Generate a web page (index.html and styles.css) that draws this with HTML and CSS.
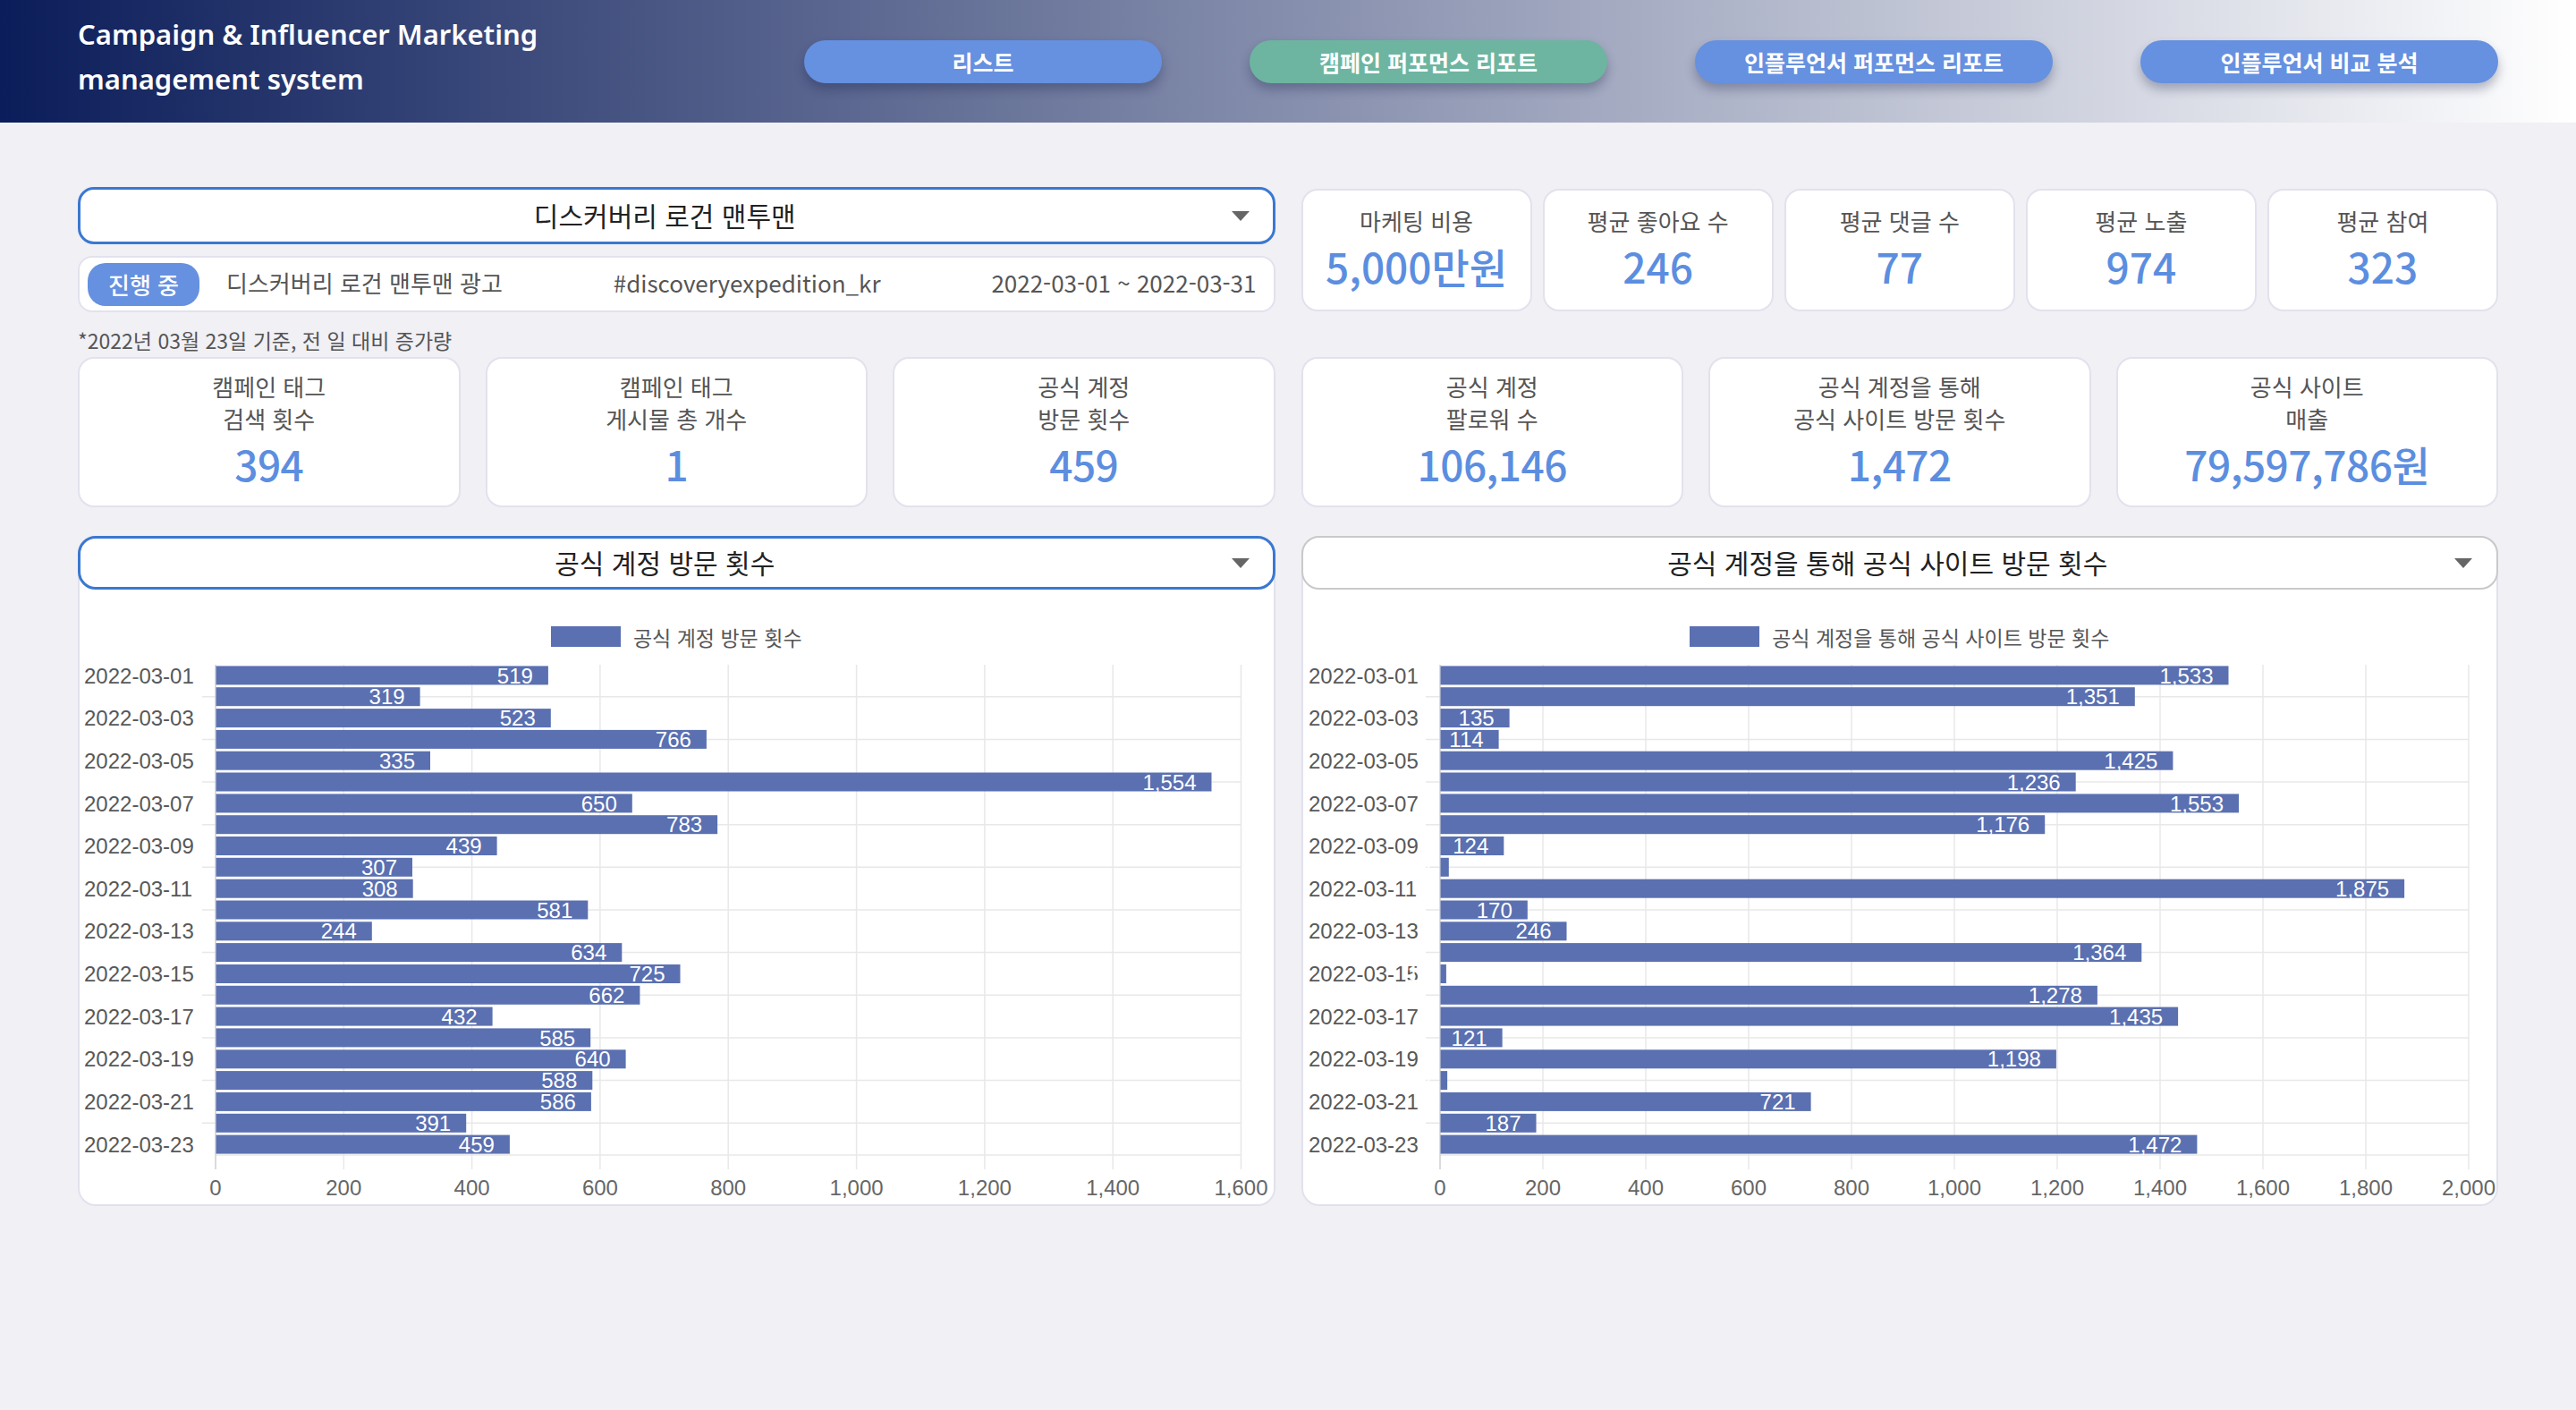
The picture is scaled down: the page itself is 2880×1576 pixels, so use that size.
FILE: index.html
```html
<!DOCTYPE html>
<html lang="ko">
<head>
<meta charset="utf-8">
<title>Campaign &amp; Influencer Marketing management system</title>
<link rel="stylesheet" href="styles.css">
</head>
<body>
<header class="topbar">
  <div class="brand">Campaign &amp; Influencer Marketing<br>management system</div>
  <nav class="nav">
    <a class="nav-btn">리스트</a>
    <a class="nav-btn nav-btn--green">캠페인 퍼포먼스 리포트</a>
    <a class="nav-btn">인플루언서 퍼포먼스 리포트</a>
    <a class="nav-btn">인플루언서 비교 분석</a>
  </nav>
</header>

<main class="page">
  <section class="two-col row-top">
    <div class="campaign">
      <div class="select select--main">
        <span></span>
        <span class="select-text">디스커버리 로건 맨투맨</span>
        <span class="caret"></span>
      </div>
      <div class="info">
        <span class="badge">진행 중</span>
        <div class="info-fields">
          <span>디스커버리 로건 맨투맨 광고</span>
          <span>#discoveryexpedition_kr</span>
          <span>2022-03-01 ~ 2022-03-31</span>
        </div>
      </div>
    </div>
    <div class="summary">
      <div class="stat"><div class="stat-label">마케팅 비용</div><div class="stat-value">5,000만원</div></div>
      <div class="stat"><div class="stat-label">평균 좋아요 수</div><div class="stat-value">246</div></div>
      <div class="stat"><div class="stat-label">평균 댓글 수</div><div class="stat-value">77</div></div>
      <div class="stat"><div class="stat-label">평균 노출</div><div class="stat-value">974</div></div>
      <div class="stat"><div class="stat-label">평균 참여</div><div class="stat-value">323</div></div>
    </div>
  </section>

  <p class="note">*2022년 03월 23일 기준, 전 일 대비 증가량</p>

  <section class="two-col row-kpi">
    <div class="kpi-group">
      <div class="kpi"><div class="stat-label">캠페인 태그<br>검색 횟수</div><div class="stat-value">394</div></div>
      <div class="kpi"><div class="stat-label">캠페인 태그<br>게시물 총 개수</div><div class="stat-value">1</div></div>
      <div class="kpi"><div class="stat-label">공식 계정<br>방문 횟수</div><div class="stat-value">459</div></div>
    </div>
    <div class="kpi-group">
      <div class="kpi"><div class="stat-label">공식 계정<br>팔로워 수</div><div class="stat-value">106,146</div></div>
      <div class="kpi"><div class="stat-label">공식 계정을 통해<br>공식 사이트 방문 횟수</div><div class="stat-value">1,472</div></div>
      <div class="kpi"><div class="stat-label">공식 사이트<br>매출</div><div class="stat-value">79,597,786원</div></div>
    </div>
  </section>

  <section class="two-col row-charts">
    <!-- Left chart -->
    <div class="chart-card">
      <div class="select select--chart">
        <span></span>
        <span class="select-text">공식 계정 방문 횟수</span>
        <span class="caret"></span>
      </div>
      <div class="legend"><span class="legend-swatch"></span><span>공식 계정 방문 횟수</span></div>
      <svg class="chart" viewBox="0 0 1334 623" width="1334" height="623">
        <g class="gridline">
          <line x1="295.3" y1="20" x2="295.3" y2="584"/>
          <line x1="438.6" y1="20" x2="438.6" y2="584"/>
          <line x1="581.9" y1="20" x2="581.9" y2="584"/>
          <line x1="725.2" y1="20" x2="725.2" y2="584"/>
          <line x1="868.6" y1="20" x2="868.6" y2="584"/>
          <line x1="1011.9" y1="20" x2="1011.9" y2="584"/>
          <line x1="1155.2" y1="20" x2="1155.2" y2="584"/>
          <line x1="1298.5" y1="20" x2="1298.5" y2="584"/>
          <line x1="137" y1="55.7" x2="1298.5" y2="55.7"/>
          <line x1="137" y1="103.4" x2="1298.5" y2="103.4"/>
          <line x1="137" y1="151.0" x2="1298.5" y2="151.0"/>
          <line x1="137" y1="198.7" x2="1298.5" y2="198.7"/>
          <line x1="137" y1="246.3" x2="1298.5" y2="246.3"/>
          <line x1="137" y1="294.0" x2="1298.5" y2="294.0"/>
          <line x1="137" y1="341.6" x2="1298.5" y2="341.6"/>
          <line x1="137" y1="389.3" x2="1298.5" y2="389.3"/>
          <line x1="137" y1="436.9" x2="1298.5" y2="436.9"/>
          <line x1="137" y1="484.6" x2="1298.5" y2="484.6"/>
          <line x1="137" y1="532.3" x2="1298.5" y2="532.3"/>
          <line x1="152" y1="568" x2="1298.5" y2="568"/>
        </g>
        <line class="axisline" x1="152" y1="20" x2="152" y2="584"/>
        <g class="tick-label">
          <text x="5" y="40.5">2022-03-01</text>
          <text x="5" y="88.2">2022-03-03</text>
          <text x="5" y="135.8">2022-03-05</text>
          <text x="5" y="183.5">2022-03-07</text>
          <text x="5" y="231.1">2022-03-09</text>
          <text x="5" y="278.8">2022-03-11</text>
          <text x="5" y="326.4">2022-03-13</text>
          <text x="5" y="374.1">2022-03-15</text>
          <text x="5" y="421.7">2022-03-17</text>
          <text x="5" y="469.4">2022-03-19</text>
          <text x="5" y="517.0">2022-03-21</text>
          <text x="5" y="564.7">2022-03-23</text>
        </g>
        <g class="bar">
          <rect x="152.5" y="21.4" width="371.4" height="21"/>
          <rect x="152.5" y="45.2" width="228.1" height="21"/>
          <rect x="152.5" y="69.1" width="374.3" height="21"/>
          <rect x="152.5" y="92.9" width="548.4" height="21"/>
          <rect x="152.5" y="116.7" width="239.5" height="21"/>
          <rect x="152.5" y="140.5" width="1113.0" height="21"/>
          <rect x="152.5" y="164.4" width="465.3" height="21"/>
          <rect x="152.5" y="188.2" width="560.6" height="21"/>
          <rect x="152.5" y="212.0" width="314.1" height="21"/>
          <rect x="152.5" y="235.8" width="219.5" height="21"/>
          <rect x="152.5" y="259.7" width="220.2" height="21"/>
          <rect x="152.5" y="283.5" width="415.8" height="21"/>
          <rect x="152.5" y="307.3" width="174.3" height="21"/>
          <rect x="152.5" y="331.1" width="453.8" height="21"/>
          <rect x="152.5" y="355.0" width="519.0" height="21"/>
          <rect x="152.5" y="378.8" width="473.9" height="21"/>
          <rect x="152.5" y="402.6" width="309.1" height="21"/>
          <rect x="152.5" y="426.4" width="418.7" height="21"/>
          <rect x="152.5" y="450.3" width="458.1" height="21"/>
          <rect x="152.5" y="474.1" width="420.8" height="21"/>
          <rect x="152.5" y="497.9" width="419.4" height="21"/>
          <rect x="152.5" y="521.8" width="279.7" height="21"/>
          <rect x="152.5" y="545.6" width="328.4" height="21"/>
        </g>
        <g class="bar-value">
          <text x="506.9" y="40.5">519</text>
          <text x="363.6" y="64.3">319</text>
          <text x="509.8" y="88.2">523</text>
          <text x="683.9" y="112.0">766</text>
          <text x="375.0" y="135.8">335</text>
          <text x="1248.5" y="159.6">1,554</text>
          <text x="600.8" y="183.5">650</text>
          <text x="696.1" y="207.3">783</text>
          <text x="449.6" y="231.1">439</text>
          <text x="355.0" y="254.9">307</text>
          <text x="355.7" y="278.8">308</text>
          <text x="551.3" y="302.6">581</text>
          <text x="309.8" y="326.4">244</text>
          <text x="589.3" y="350.2">634</text>
          <text x="654.5" y="374.1">725</text>
          <text x="609.4" y="397.9">662</text>
          <text x="444.6" y="421.7">432</text>
          <text x="554.2" y="445.5">585</text>
          <text x="593.6" y="469.4">640</text>
          <text x="556.3" y="493.2">588</text>
          <text x="554.9" y="517.0">586</text>
          <text x="415.2" y="540.9">391</text>
          <text x="463.9" y="564.7">459</text>
        </g>
        <g class="axis-label">
          <text x="152" y="612.6">0</text>
          <text x="295.3" y="612.6">200</text>
          <text x="438.6" y="612.6">400</text>
          <text x="581.9" y="612.6">600</text>
          <text x="725.2" y="612.6">800</text>
          <text x="868.6" y="612.6">1,000</text>
          <text x="1011.9" y="612.6">1,200</text>
          <text x="1155.2" y="612.6">1,400</text>
          <text x="1298.5" y="612.6">1,600</text>
        </g>
      </svg>
    </div>

    <!-- Right chart -->
    <div class="chart-card">
      <div class="select select--chart select--plain">
        <span></span>
        <span class="select-text">공식 계정을 통해 공식 사이트 방문 횟수</span>
        <span class="caret"></span>
      </div>
      <div class="legend"><span class="legend-swatch"></span><span>공식 계정을 통해 공식 사이트 방문 횟수</span></div>
      <svg class="chart" viewBox="0 0 1334 623" width="1334" height="623">
        <g class="gridline">
          <line x1="268" y1="20" x2="268" y2="584"/>
          <line x1="383" y1="20" x2="383" y2="584"/>
          <line x1="498" y1="20" x2="498" y2="584"/>
          <line x1="613" y1="20" x2="613" y2="584"/>
          <line x1="728" y1="20" x2="728" y2="584"/>
          <line x1="843" y1="20" x2="843" y2="584"/>
          <line x1="958" y1="20" x2="958" y2="584"/>
          <line x1="1073" y1="20" x2="1073" y2="584"/>
          <line x1="1188" y1="20" x2="1188" y2="584"/>
          <line x1="1303" y1="20" x2="1303" y2="584"/>
          <line x1="137" y1="55.7" x2="1303" y2="55.7"/>
          <line x1="137" y1="103.4" x2="1303" y2="103.4"/>
          <line x1="137" y1="151.0" x2="1303" y2="151.0"/>
          <line x1="137" y1="198.7" x2="1303" y2="198.7"/>
          <line x1="137" y1="246.3" x2="1303" y2="246.3"/>
          <line x1="137" y1="294.0" x2="1303" y2="294.0"/>
          <line x1="137" y1="341.6" x2="1303" y2="341.6"/>
          <line x1="137" y1="389.3" x2="1303" y2="389.3"/>
          <line x1="137" y1="436.9" x2="1303" y2="436.9"/>
          <line x1="137" y1="484.6" x2="1303" y2="484.6"/>
          <line x1="137" y1="532.3" x2="1303" y2="532.3"/>
          <line x1="153" y1="568" x2="1303" y2="568"/>
        </g>
        <line class="axisline" x1="153" y1="20" x2="153" y2="584"/>
        <g class="tick-label">
          <text x="6" y="40.5">2022-03-01</text>
          <text x="6" y="88.2">2022-03-03</text>
          <text x="6" y="135.8">2022-03-05</text>
          <text x="6" y="183.5">2022-03-07</text>
          <text x="6" y="231.1">2022-03-09</text>
          <text x="6" y="278.8">2022-03-11</text>
          <text x="6" y="326.4">2022-03-13</text>
          <text x="6" y="374.1">2022-03-15</text>
          <text x="6" y="421.7">2022-03-17</text>
          <text x="6" y="469.4">2022-03-19</text>
          <text x="6" y="517.0">2022-03-21</text>
          <text x="6" y="564.7">2022-03-23</text>
        </g>
        <g class="bar">
          <rect x="153.5" y="21.4" width="881.0" height="21"/>
          <rect x="153.5" y="45.2" width="776.3" height="21"/>
          <rect x="153.5" y="69.1" width="77.1" height="21"/>
          <rect x="153.5" y="92.9" width="65.1" height="21"/>
          <rect x="153.5" y="116.7" width="818.9" height="21"/>
          <rect x="153.5" y="140.5" width="710.2" height="21"/>
          <rect x="153.5" y="164.4" width="892.5" height="21"/>
          <rect x="153.5" y="188.2" width="675.7" height="21"/>
          <rect x="153.5" y="212.0" width="70.8" height="21"/>
          <rect x="153.5" y="235.8" width="9.3" height="21"/>
          <rect x="153.5" y="259.7" width="1077.6" height="21"/>
          <rect x="153.5" y="283.5" width="97.3" height="21"/>
          <rect x="153.5" y="307.3" width="141.0" height="21"/>
          <rect x="153.5" y="331.1" width="783.8" height="21"/>
          <rect x="153.5" y="355.0" width="6.4" height="21"/>
          <rect x="153.5" y="378.8" width="734.4" height="21"/>
          <rect x="153.5" y="402.6" width="824.6" height="21"/>
          <rect x="153.5" y="426.4" width="69.1" height="21"/>
          <rect x="153.5" y="450.3" width="688.4" height="21"/>
          <rect x="153.5" y="474.1" width="7.6" height="21"/>
          <rect x="153.5" y="497.9" width="414.1" height="21"/>
          <rect x="153.5" y="521.8" width="107.0" height="21"/>
          <rect x="153.5" y="545.6" width="845.9" height="21"/>
        </g>
        <g class="bar-value">
          <text x="1017.5" y="40.5">1,533</text>
          <text x="912.8" y="64.3">1,351</text>
          <text x="213.6" y="88.2">135</text>
          <text x="201.6" y="112.0">114</text>
          <text x="955.4" y="135.8">1,425</text>
          <text x="846.7" y="159.6">1,236</text>
          <text x="1029.0" y="183.5">1,553</text>
          <text x="812.2" y="207.3">1,176</text>
          <text x="207.3" y="231.1">124</text>
          <text x="145.8" y="254.9">17</text>
          <text x="1214.1" y="278.8">1,875</text>
          <text x="233.8" y="302.6">170</text>
          <text x="277.5" y="326.4">246</text>
          <text x="920.3" y="350.2">1,364</text>
          <text x="142.9" y="374.1">12</text>
          <text x="870.9" y="397.9">1,278</text>
          <text x="961.1" y="421.7">1,435</text>
          <text x="205.6" y="445.5">121</text>
          <text x="824.9" y="469.4">1,198</text>
          <text x="144.1" y="493.2">14</text>
          <text x="550.6" y="517.0">721</text>
          <text x="243.5" y="540.9">187</text>
          <text x="982.4" y="564.7">1,472</text>
        </g>
        <g class="axis-label">
          <text x="153" y="612.6">0</text>
          <text x="268" y="612.6">200</text>
          <text x="383" y="612.6">400</text>
          <text x="498" y="612.6">600</text>
          <text x="613" y="612.6">800</text>
          <text x="728" y="612.6">1,000</text>
          <text x="843" y="612.6">1,200</text>
          <text x="958" y="612.6">1,400</text>
          <text x="1073" y="612.6">1,600</text>
          <text x="1188" y="612.6">1,800</text>
          <text x="1303" y="612.6">2,000</text>
        </g>
      </svg>
    </div>
  </section>
</main>
</body>
</html>
```

FILE: styles.css
```css
* { box-sizing: border-box; }

body {
  margin: 0;
  background: #f0f0f5;
  font-family: "Noto Sans CJK KR", "Noto Sans", sans-serif;
  color: #555;
}

/* ---------- Header ---------- */
.topbar {
  height: 137px;
  background: linear-gradient(90deg, #0b1d5a 0%, #ffffff 100%);
  display: flex;
  align-items: center;
  padding: 0 87px;
}

.brand {
  font-family: "Noto Sans", "Noto Sans CJK KR", sans-serif;
  font-weight: 600;
  font-size: 31px;
  line-height: 50px;
  color: #fff;
  margin-top: -12px;
  white-space: nowrap;
}

.nav {
  margin-left: auto;
  display: flex;
  gap: 98px;
}

.nav-btn {
  width: 400px;
  height: 48px;
  border-radius: 24px;
  background: #6690e0;
  color: #fff;
  font-weight: 700;
  font-size: 25px;
  display: flex;
  align-items: center;
  justify-content: center;
  box-shadow: 0 7px 12px rgba(20, 30, 70, 0.3);
}

.nav-btn--green { background: #6db5a0; }

/* ---------- Page ---------- */
.page { padding: 0 87px; }

.two-col {
  display: grid;
  grid-template-columns: 1fr 1fr;
  column-gap: 29px;
}

.row-top { margin-top: 72px; }

/* dropdowns */
.select {
  display: grid;
  grid-template-columns: 1fr auto 1fr;
  align-items: center;
  background: #fff;
  color: #222;
  font-size: 30px;
}

.select--main {
  height: 64px;
  border: 3px solid #3b78d1;
  border-radius: 18px;
  padding-right: 26px;
}

.select-text { margin-top: -2px; }

.caret {
  justify-self: end;
  width: 0;
  height: 0;
  border-left: 10px solid transparent;
  border-right: 10px solid transparent;
  border-top: 11px solid #666;
}

.info {
  margin-top: 13px;
  height: 63px;
  background: #fff;
  border: 2px solid #e2e2ee;
  border-radius: 16px;
  display: flex;
  align-items: center;
  padding: 0 19px 0 9px;
}

.badge {
  width: 125px;
  height: 48px;
  border-radius: 20px;
  background: #6690e0;
  color: #fff;
  font-size: 26px;
  font-weight: 500;
  display: flex;
  align-items: center;
  justify-content: center;
}

.info-fields {
  flex: 1;
  margin-left: 30px;
  display: flex;
  justify-content: space-between;
  font-size: 26px;
  line-height: 32px;
  margin-top: -3px;
  color: #555;
}

.summary {
  margin-top: 2px;
  height: 137px;
  display: grid;
  grid-template-columns: repeat(5, 1fr);
  gap: 12px;
}

.stat,
.kpi {
  background: #fff;
  border: 2px solid #e2e2ee;
  border-radius: 18px;
  display: flex;
  flex-direction: column;
  align-items: center;
  text-align: center;
}

.stat { padding-top: 16px; }

.stat-label {
  font-size: 26px;
  line-height: 36px;
  color: #555;
}

.stat-value {
  margin-top: 4px;
  font-size: 46px;
  line-height: 56px;
  font-weight: 500;
  color: #5c8ee0;
}

.kpi .stat-value { letter-spacing: -0.5px; }

.note {
  margin: 17px 0 0;
  font-size: 23px;
  line-height: 28px;
  color: #555;
}

.row-kpi { margin-top: 5px; }

.kpi-group {
  display: grid;
  grid-template-columns: repeat(3, 1fr);
  gap: 28px;
}

.kpi {
  height: 168px;
  padding-top: 13px;
}

/* ---------- Charts ---------- */
.row-charts { margin-top: 32px; }

.chart-card {
  height: 749px;
  background: #fff;
  border: 2px solid #e2e2ee;
  border-radius: 20px;
}

.select--chart {
  height: 60px;
  margin: -2px -2px 0;
  border: 3px solid #3b78d1;
  border-radius: 20px;
  padding-right: 26px;
}

.select--plain { border: 2px solid #c9c9c9; padding-right: 27px; }

.legend {
  margin-top: 41px;
  height: 23px;
  display: flex;
  justify-content: center;
  align-items: center;
  gap: 14px;
  font-size: 23px;
  color: #555;
}

.legend-swatch {
  width: 78px;
  height: 23px;
  background: #5a70b1;
}

.chart { display: block; }

.gridline line { stroke: #e8e8e8; stroke-width: 1.5; }
.axisline { stroke: #cfcfcf; stroke-width: 1.5; }

.bar rect { fill: #5a70b1; }

.tick-label text,
.axis-label text,
.bar-value text {
  font-family: "Liberation Sans", Arial, sans-serif;
  font-size: 24px;
}

.tick-label text { fill: #585858; }
.axis-label text { fill: #666; text-anchor: middle; }
.bar-value text { fill: #fff; text-anchor: end; }
```
